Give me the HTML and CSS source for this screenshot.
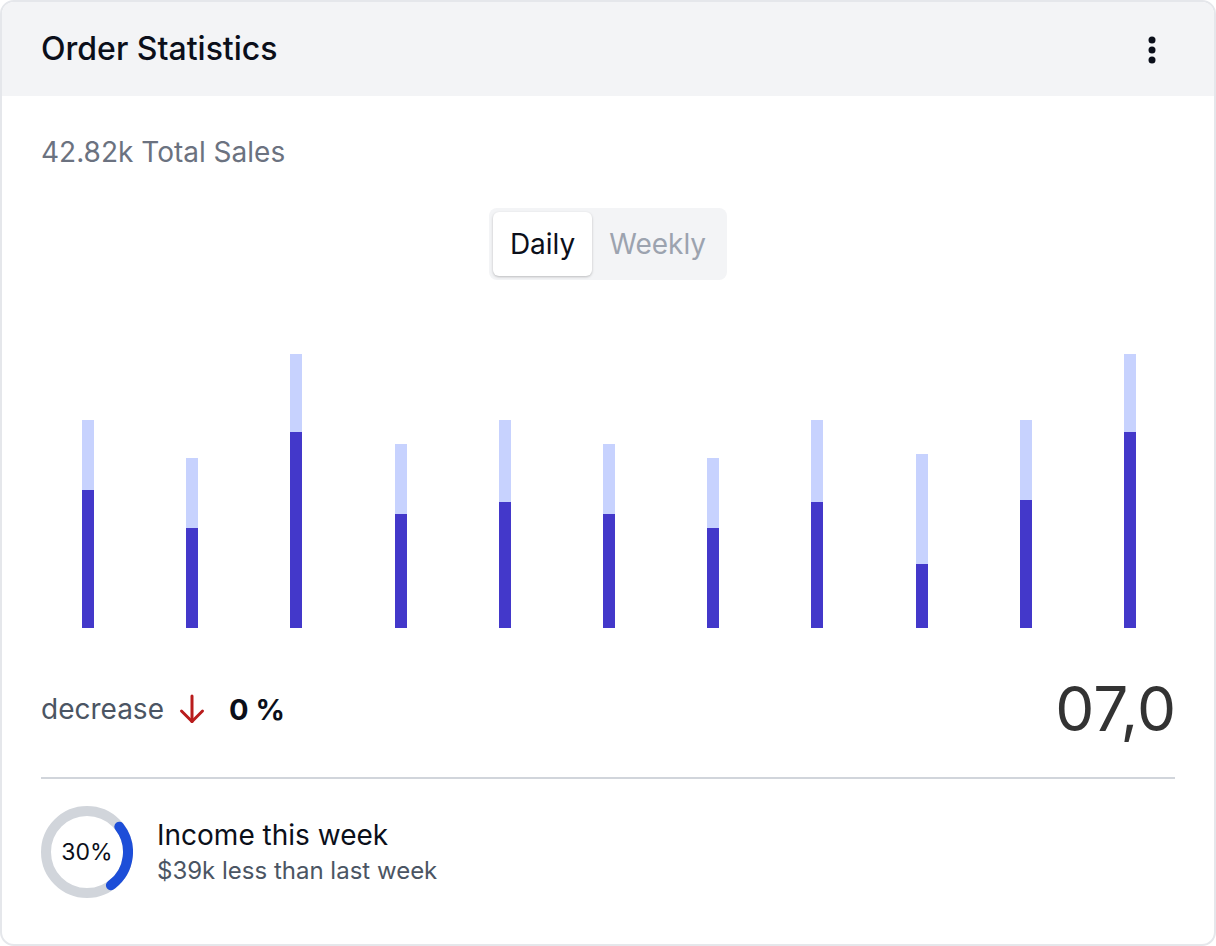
FILE: index.html
```html
<!DOCTYPE html>
<html lang="en">
<head>
<meta charset="utf-8">
<title>Order Statistics</title>
<link rel="stylesheet" href="styles.css">
</head>
<body>
<div class="card">
  <div class="card-header">
    <h2 class="title">Order Statistics</h2>
    <button class="kebab" aria-label="More">
      <svg width="8" height="28" viewBox="0 0 8 28"><circle cx="4" cy="4" r="3.5" fill="#0b0f1a"/><circle cx="4" cy="14" r="3.5" fill="#0b0f1a"/><circle cx="4" cy="24" r="3.5" fill="#0b0f1a"/></svg>
    </button>
  </div>
  <div class="card-body">
    <p class="total">42.82k Total Sales</p>
    <div class="toggle-wrap">
      <div class="toggle">
        <button class="tab active">Daily</button>
        <button class="tab">Weekly</button>
      </div>
    </div>
    <div class="chart">
      <div class="bar"><div class="light" style="height:70px"></div><div class="dark" style="height:138px"></div></div>
      <div class="bar"><div class="light" style="height:70px"></div><div class="dark" style="height:100px"></div></div>
      <div class="bar"><div class="light" style="height:78px"></div><div class="dark" style="height:196px"></div></div>
      <div class="bar"><div class="light" style="height:70px"></div><div class="dark" style="height:114px"></div></div>
      <div class="bar"><div class="light" style="height:82px"></div><div class="dark" style="height:126px"></div></div>
      <div class="bar"><div class="light" style="height:70px"></div><div class="dark" style="height:114px"></div></div>
      <div class="bar"><div class="light" style="height:70px"></div><div class="dark" style="height:100px"></div></div>
      <div class="bar"><div class="light" style="height:82px"></div><div class="dark" style="height:126px"></div></div>
      <div class="bar"><div class="light" style="height:110px"></div><div class="dark" style="height:64px"></div></div>
      <div class="bar"><div class="light" style="height:80px"></div><div class="dark" style="height:128px"></div></div>
      <div class="bar"><div class="light" style="height:78px"></div><div class="dark" style="height:196px"></div></div>
    </div>
    <div class="stats-row">
      <div class="change">
        <span class="change-label">decrease</span>
        <svg class="arrow" width="26" height="30" viewBox="0 0 26 30" fill="none" stroke="#b91c1c" stroke-width="3" stroke-linecap="round" stroke-linejoin="round"><path d="M13 2V27.5"/><path d="M2.5 17L13 27.5 23.5 17"/></svg>
        <span class="change-value">0 %</span>
      </div>
      <div class="big-number">07,0</div>
    </div>
    <div class="income">
      <div class="donut">
        <svg width="92" height="92" viewBox="0 0 92 92">
          <circle cx="46" cy="46" r="41" fill="none" stroke="#d1d5db" stroke-width="10"/>
          <circle cx="46" cy="46" r="41" fill="none" stroke="#1d4ed8" stroke-width="10" stroke-linecap="round" stroke-dasharray="66 300" transform="rotate(-38 46 46)"/>
        </svg>
        <span class="donut-label">30%</span>
      </div>
      <div class="income-text">
        <div class="income-title">Income this week</div>
        <div class="income-sub">$39k less than last week</div>
      </div>
    </div>
  </div>
</div>
</body>
</html>
```
FILE: styles.css
```css
* { box-sizing: border-box; }
html, body { margin: 0; padding: 0; background: #ffffff; }
body {
  font-family: Inter, "Noto Sans", "Liberation Sans", sans-serif;
  width: 1216px;
  height: 946px;
}
.card {
  width: 1216px;
  height: 946px;
  border: 2px solid #e5e7eb;
  border-radius: 14px;
  overflow: hidden;
  background: #fff;
  display: flex;
  flex-direction: column;
}
.card-header {
  height: 94px;
  background: #f3f4f6;
  display: flex;
  align-items: center;
  justify-content: space-between;
  padding: 0 58px 0 39px;
  flex: none;
}
.title {
  margin: 0;
  font-size: 32px;
  font-weight: 500;
  color: #0b0f1a;
  line-height: 40px;
}
.kebab {
  border: 0;
  background: none;
  padding: 0;
  display: flex;
  margin-top: 1px;
}
.card-body {
  padding: 0 39px;
  display: flex;
  flex-direction: column;
}
.total {
  margin: 40px 0 0;
  font-size: 28px;
  line-height: 32px;
  color: #6b7280;
}
.toggle-wrap {
  display: flex;
  justify-content: center;
  margin-top: 40px;
}
.toggle {
  background: #f3f4f6;
  border-radius: 8px;
  padding: 4px;
  display: flex;
}
.tab {
  font-family: inherit;
  border: 0;
  background: transparent;
  font-size: 28px;
  line-height: 32px;
  padding: 16px 17px;
  color: #9ca3af;
  border-radius: 6px;
  font-weight: 400;
}
.tab.active {
  background: #fff;
  color: #0b0f1a;
  box-shadow: 0 1px 3px rgba(0,0,0,0.18), 0 1px 2px rgba(0,0,0,0.06);
}
.chart {
  height: 348px;
  display: flex;
  align-items: flex-end;
  justify-content: space-between;
  padding: 0 39px 0 41px;
}
.bar {
  width: 12px;
  display: flex;
  flex-direction: column;
}
.light { background: #c7d2fe; }
.dark { background: #4338ca; }
.stats-row {
  display: flex;
  justify-content: space-between;
  align-items: center;
  margin-top: 45px;
  height: 70px;
}
.change {
  display: flex;
  align-items: center;
  margin-top: 2px;
}
.change-label {
  font-size: 28px;
  color: #4b5563;
}
.arrow {
  margin-left: 15px;
}
.change-value {
  margin-left: 24px;
  font-size: 29px;
  font-weight: 700;
  color: #0b0f1a;
}
.big-number {
  font-size: 62px;
  color: #333333;
  font-weight: 400;
  margin-right: -1px;
}
.income {
  margin-top: 34px;
  border-top: 2px solid #d1d5db;
  padding-top: 27px;
  display: flex;
  align-items: center;
  gap: 24px;
}
.donut {
  position: relative;
  width: 92px;
  height: 92px;
  flex: none;
}
.donut svg { display: block; }
.donut-label {
  position: absolute;
  inset: 0;
  display: flex;
  align-items: center;
  justify-content: center;
  font-size: 23px;
  color: #0b0f1a;
}
.income-title {
  font-size: 28px;
  color: #0b0f1a;
  line-height: 32px;
}
.income-sub {
  font-size: 24px;
  color: #4b5563;
  line-height: 30px;
  margin-top: 5px;
}
```
